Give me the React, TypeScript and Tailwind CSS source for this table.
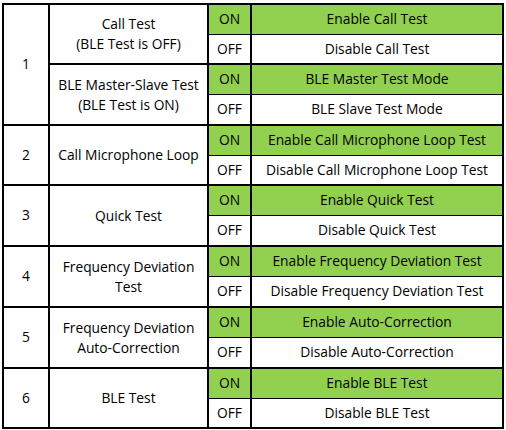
import React from "react";

type Item = { name: string[]; on: string; off: string; offH?: number };
type Group = { num: string; items: Item[] };

const groups: Group[] = [
  {
    num: "1",
    items: [
      { name: ["Call Test", "(BLE Test is OFF)"], on: "Enable Call Test", off: "Disable Call Test", offH: 28 },
      { name: ["BLE Master-Slave Test", "(BLE Test is ON)"], on: "BLE Master Test Mode", off: "BLE Slave Test Mode" },
    ],
  },
  {
    num: "2",
    items: [
      { name: ["Call Microphone Loop"], on: "Enable Call Microphone Loop Test", off: "Disable Call Microphone Loop Test", offH: 28 },
    ],
  },
  { num: "3", items: [{ name: ["Quick Test"], on: "Enable Quick Test", off: "Disable Quick Test" }] },
  {
    num: "4",
    items: [
      { name: ["Frequency Deviation", "Test"], on: "Enable Frequency Deviation Test", off: "Disable Frequency Deviation Test" },
    ],
  },
  {
    num: "5",
    items: [
      { name: ["Frequency Deviation", "Auto-Correction"], on: "Enable Auto-Correction", off: "Disable Auto-Correction" },
    ],
  },
  { num: "6", items: [{ name: ["BLE Test"], on: "Enable BLE Test", off: "Disable BLE Test", offH: 28 }] },
];

function Sub({ item, last }: { item: Item; last: boolean }) {
  const offH = item.offH ?? 29;
  return (
    <div className={`flex ${last ? "" : "border-b-2 border-black"}`}>
      <div className="w-[159px] shrink-0 border-r-2 border-black flex flex-col items-center justify-center text-center leading-[20px]">
        {item.name.map((n, i) => (
          <div key={i}>{n}</div>
        ))}
      </div>
      <div className="flex-1 flex flex-col">
        <div className="flex h-[30px] border-b border-black bg-[#92D050]">
          <div className="w-[43px] shrink-0 border-r-2 border-black flex items-center justify-center">ON</div>
          <div className="flex-1 flex items-center justify-center">{item.on}</div>
        </div>
        <div className="flex" style={{ height: offH }}>
          <div className="w-[43px] shrink-0 border-r-2 border-black flex items-center justify-center">OFF</div>
          <div className="flex-1 flex items-center justify-center">{item.off}</div>
        </div>
      </div>
    </div>
  );
}

export default function App() {
  return (
    <div className="w-[506px] h-[430px] bg-white overflow-hidden pt-[3px] pl-[2px]">
      <div
        className="w-[502px] border-2 border-black text-black text-[13.8px]"
        style={{ fontFamily: '"Open Sans", "Liberation Sans", sans-serif' }}
      >
        {groups.map((g, gi) => (
          <div key={g.num} className={`flex ${gi < groups.length - 1 ? "border-b-2 border-black" : ""}`}>
            <div className="w-[46px] shrink-0 border-r-2 border-black flex items-center justify-center">{g.num}</div>
            <div className="flex-1 flex flex-col">
              {g.items.map((it, i) => (
                <Sub key={i} item={it} last={i === g.items.length - 1} />
              ))}
            </div>
          </div>
        ))}
      </div>
    </div>
  );
}
